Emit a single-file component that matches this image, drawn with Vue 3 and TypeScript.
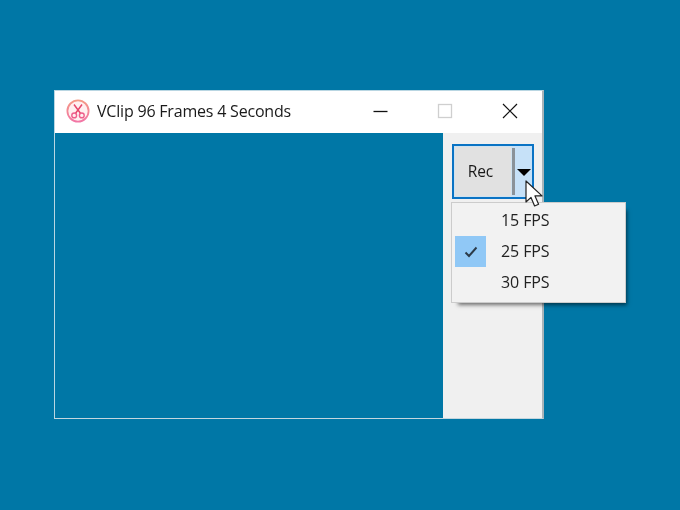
<script setup lang="ts">
const rates = [
  { label: '15 FPS', checked: false },
  { label: '25 FPS', checked: true },
  { label: '30 FPS', checked: false },
]
</script>

<template>
  <div class="desktop">
    <div class="window">
      <header class="titlebar">
        <svg class="app-icon" width="24" height="24" viewBox="0 0 24 24" fill="none">
          <defs>
            <linearGradient id="ring" x1="0" y1="0" x2="0" y2="1">
              <stop offset="0" stop-color="#f49a86" />
              <stop offset="1" stop-color="#f276a6" />
            </linearGradient>
          </defs>
          <circle cx="12" cy="12" r="10.6" stroke="url(#ring)" stroke-width="1.8" fill="#fff0f0" />
          <path d="M8 5.5 14.6 14.5M16 5.5 9.4 14.5" stroke="#e6486c" stroke-width="1.5" />
          <circle cx="8.2" cy="16.4" r="2.4" stroke="#ee5f8c" stroke-width="1.4" />
          <circle cx="15.8" cy="16.4" r="2.4" stroke="#ee5f8c" stroke-width="1.4" />
        </svg>
        <span class="title">VClip 96 Frames 4 Seconds</span>
        <div class="controls">
          <span class="ctl">
            <svg width="16" height="16" viewBox="0 0 16 16"><path d="M1.5 8.5h14" stroke="#111" stroke-width="1.3" /></svg>
          </span>
          <span class="ctl">
            <svg width="16" height="16" viewBox="0 0 16 16"><rect x="1.5" y="1.5" width="13" height="13" fill="none" stroke="#cfcfcf" stroke-width="1.3" /></svg>
          </span>
          <span class="ctl">
            <svg width="16" height="16" viewBox="0 0 16 16"><path d="M1 1l14 14M15 1 1 15" stroke="#111" stroke-width="1.2" /></svg>
          </span>
        </div>
      </header>
      <div class="client">
        <div class="view"></div>
        <aside class="panel">
          <div class="split">
            <div class="rec"><span>Rec</span></div>
            <div class="divider"></div>
            <div class="arrow"><i class="tri"></i></div>
          </div>
        </aside>
      </div>
    </div>

    <ul class="menu">
      <li v-for="r in rates" :key="r.label" class="item">
        <span class="check" :class="{ on: r.checked }">
          <svg v-if="r.checked" width="14" height="12" viewBox="0 0 14 12" fill="none">
            <path d="M1.5 6.5 5 10l7.5-8.5" stroke="#2b3a48" stroke-width="1.9" />
          </svg>
        </span>
        <span class="label">{{ r.label }}</span>
      </li>
    </ul>

    <svg class="cursor" width="19" height="28" viewBox="0 0 19 28">
      <path d="M1 1v21l5-4.6 3.6 8.6 4-1.7-3.6-8.4h7z" fill="#fff" stroke="#222" stroke-width="1.2" stroke-linejoin="round" />
    </svg>
  </div>
</template>

<style scoped>
.desktop {
  position: relative;
  width: 680px;
  height: 510px;
  background: #0077a6;
  padding: 90px 0 0 54px;
  box-sizing: border-box;
  overflow: hidden;
  font-family: "Open Sans", "Noto Sans", sans-serif;
  color: #1a1a1a;
  filter: blur(0.35px);
}
.window {
  width: 490px;
  height: 329px;
  box-sizing: border-box;
  border: 1px solid #b9d6e2;
  border-right: 2px solid #a9b4b9;
  border-bottom: 1px solid #c4d6de;
  display: flex;
  flex-direction: column;
}
.titlebar {
  height: 42px;
  background: #fff;
  display: flex;
  align-items: flex-start;
  padding-left: 11px;
  flex: none;
}
.app-icon {
  flex: none;
  margin-top: 8px;
}
.title {
  margin-left: 7px;
  margin-top: 9px;
  font-size: 16px;
  line-height: 22px;
  letter-spacing: -0.2px;
  white-space: nowrap;
}
.controls {
  margin-left: auto;
  display: flex;
}
.ctl {
  width: 65px;
  height: 40px;
  display: flex;
  align-items: center;
  justify-content: center;
}
.client {
  flex: 1;
  display: flex;
  min-height: 0;
}
.view {
  flex: 1;
  background: #0077a6;
}
.panel {
  width: 99px;
  background: #f0f0f0;
  padding: 11px 0 0 9px;
  box-sizing: border-box;
}
.split {
  width: 82px;
  height: 55px;
  box-sizing: border-box;
  border: 2px solid #0a73c4;
  display: flex;
  background: #c6e1f8;
}
.rec {
  width: 58px;
  background: #e1e1e1;
  display: flex;
  align-items: center;
  justify-content: center;
  font-size: 15.5px;
  letter-spacing: -0.1px;
  padding: 0 5px 2px 0;
  border: 1px solid #cfe2f0;
  box-sizing: border-box;
}
.divider {
  width: 3px;
  margin: 2px 0;
  background: #8a9299;
  flex: none;
}
.arrow {
  flex: 1;
  display: flex;
  align-items: center;
  justify-content: center;
}
.tri {
  width: 0;
  height: 0;
  border-left: 7px solid transparent;
  border-right: 7px solid transparent;
  border-top: 7px solid #000;
  margin-top: 1px;
}
.menu {
  position: absolute;
  left: 451px;
  top: 202px;
  width: 175px;
  height: 101px;
  box-sizing: border-box;
  margin: 0;
  padding: 2px 0;
  list-style: none;
  background: #f2f2f2;
  border: 1px solid #cccccc;
  box-shadow: 4px 5px 4px -3px rgba(0, 0, 0, 0.55);
}
.item {
  height: 31px;
  display: flex;
  align-items: center;
  padding-left: 3px;
  font-size: 16px;
  color: #222;
}
.check {
  width: 31px;
  height: 31px;
  display: flex;
  align-items: center;
  justify-content: center;
  flex: none;
}
.check.on { background: #90c8f6; }
.label {
  margin-left: 15px;
  margin-bottom: 2px;
  letter-spacing: -0.1px;
}
.cursor {
  position: absolute;
  left: 525px;
  top: 180px;
}
</style>
